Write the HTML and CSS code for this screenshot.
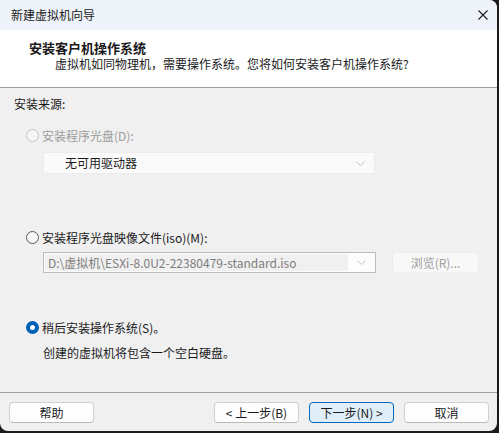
FILE: index.html
```html
<!DOCTYPE html>
<html lang="zh-CN">
  <head>
    <meta charset="UTF-8" />
    <meta name="viewport" content="width=device-width, initial-scale=1.0" />
    <title>新建虚拟机向导</title>
    <link rel="stylesheet" href="styles.css">
  </head>
  <body>
    <div class="window">
      <div class="titlebar">
        <span class="title">新建虚拟机向导</span>
        <svg class="close" width="10" height="10" viewBox="0 0 10 10">
          <path d="M0.5 0.5 L9.5 9.5 M9.5 0.5 L0.5 9.5" stroke="#1a1a1a" stroke-width="1.1" fill="none" />
        </svg>
      </div>
      <div class="header">
        <div class="header-title">安装客户机操作系统</div>
        <div class="header-sub">虚拟机如同物理机，需要操作系统。您将如何安装客户机操作系统?</div>
      </div>
      <div class="content">
        <div class="section-label">安装来源:</div>

        <div class="radio-row disabled">
          <span class="radio"></span>
          <span class="radio-label">安装程序光盘(D):</span>
        </div>
        <div class="select disabled-select">
          <span class="select-text">无可用驱动器</span>
          <svg class="chevron" width="9" height="5" viewBox="0 0 9 5">
            <path d="M0.5 0.5 L4.5 4.5 L8.5 0.5" stroke="#c2c2c2" fill="none" />
          </svg>
        </div>

        <div class="radio-row second">
          <span class="radio"></span>
          <span class="radio-label">安装程序光盘映像文件(iso)(M):</span>
        </div>
        <div class="iso-row">
          <div class="combo">
            <div class="combo-edit">D:\虚拟机\ESXi-8.0U2-22380479-standard.iso</div>
            <svg class="chevron" width="9" height="5" viewBox="0 0 9 5">
              <path d="M0.5 0.5 L4.5 4.5 L8.5 0.5" stroke="#c2c2c2" fill="none" />
            </svg>
          </div>
          <div class="browse">浏览(R)...</div>
        </div>

        <div class="radio-row third">
          <span class="radio checked"></span>
          <span class="radio-label">稍后安装操作系统(S)。</span>
        </div>
        <div class="desc">创建的虚拟机将包含一个空白硬盘。</div>
      </div>
      <div class="footer">
        <div class="btn">帮助</div>
        <div class="footer-right">
          <div class="btn">&lt; 上一步(B)</div>
          <div class="btn primary">下一步(N) &gt;</div>
          <div class="btn">取消</div>
        </div>
      </div>
    </div>
  </body>
</html>
```

FILE: styles.css
```css
body {
  margin: 0;
  background: #1c1c1c;
  font-family: "Noto Sans CJK SC", "Noto Sans", sans-serif;
  font-size: 12px;
  color: #1a1a1a;
}
.window {
  width: 497px;
  height: 431px;
  background: #f0f0f0;
  border-radius: 0 8px 8px 8px;
  overflow: hidden;
  display: flex;
  flex-direction: column;
}
.titlebar {
  height: 30px;
  background: #eef3fa;
  display: flex;
  align-items: center;
  justify-content: space-between;
  padding: 0 9px 0 11px;
}
.title {
  line-height: 16px;
}
.header {
  height: 57px;
  background: #ffffff;
  border-bottom: 1px solid #a0a0a0;
  box-sizing: content-box;
}
.header-title {
  font-weight: bold;
  font-size: 13px;
  line-height: 16px;
  margin: 10px 0 0 29px;
}
.header-sub {
  line-height: 16px;
  margin: 0 0 0 55px;
}
.content {
  height: 304px;
  padding: 8px 0 0 14px;
  box-sizing: border-box;
  border-bottom: 1px solid #a0a0a0;
  box-sizing: content-box;
  height: 296px;
}
.section-label {
  line-height: 16px;
}
.radio-row {
  display: flex;
  align-items: center;
  gap: 3px;
  height: 16px;
  margin: 15px 0 0 12px;
}
.radio-row.second {
  margin-top: 55px;
}
.radio-row.third {
  margin-top: 46px;
}
.radio {
  width: 13px;
  height: 13px;
  border-radius: 50%;
  border: 1px solid #5a5a5a;
  background: #f7f7f7;
  box-sizing: border-box;
}
.disabled .radio {
  border-color: #c4c4c4;
  background: #f5f5f5;
}
.disabled .radio-label {
  color: #9d9d9d;
}
.radio.checked {
  border: 4px solid #005fb8;
  background: #ffffff;
}
.select {
  width: 332px;
  height: 22px;
  margin: 9px 0 0 29px;
  display: flex;
  align-items: center;
  justify-content: space-between;
  box-sizing: border-box;
  padding: 0 9px 0 21px;
}
.disabled-select {
  background: #fafafa;
  border: 1px solid #ececec;
}
.select-text {
  line-height: 16px;
}
.iso-row {
  display: flex;
  align-items: center;
  gap: 16px;
  margin: 7px 0 0 29px;
}
.combo {
  width: 333px;
  height: 21px;
  border: 1px solid #bdbdbd;
  background: #fdfdfd;
  box-sizing: border-box;
  display: flex;
  align-items: center;
  padding: 0 9px 0 1px;
}
.combo-edit {
  flex: 1;
  height: 17px;
  line-height: 17px;
  background: #f0f0f0;
  color: #7d7d7d;
  padding-left: 3px;
  margin-right: 9px;
  white-space: nowrap;
  overflow: hidden;
}
.browse {
  width: 87px;
  height: 21px;
  box-sizing: border-box;
  border: 1px solid #ededed;
  border-radius: 4px;
  background: #f8f8f8;
  color: #9d9d9d;
  text-align: center;
  line-height: 19px;
}
.desc {
  line-height: 16px;
  margin: 10px 0 0 29px;
}
.footer {
  flex: 1;
  display: flex;
  justify-content: space-between;
  align-items: flex-start;
  padding: 9px 8px 0 9px;
}
.footer-right {
  display: flex;
  gap: 10px;
}
.btn {
  width: 85px;
  height: 21px;
  box-sizing: border-box;
  border: 1px solid #d0d0d0;
  border-bottom-color: #bababa;
  border-radius: 4px;
  background: #fdfdfd;
  text-align: center;
  line-height: 19px;
}
.btn.primary {
  background: #e0eef9;
  border-color: #0067c0;
}
```
